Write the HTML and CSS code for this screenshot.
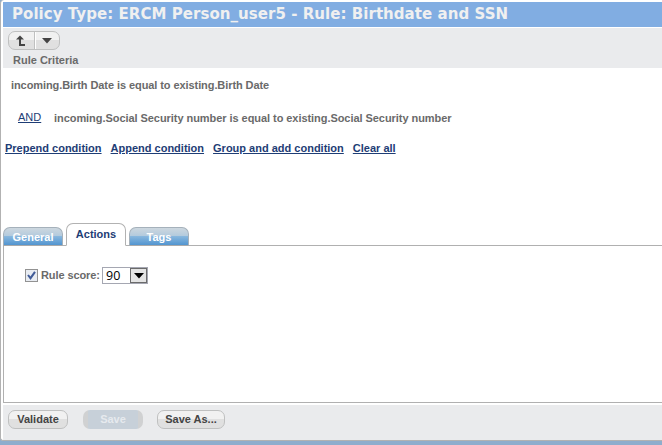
FILE: index.html
```
<!DOCTYPE html>
<html lang="en">
<head>
<meta charset="utf-8">
<title>Rule editor</title>
<link rel="stylesheet" href="styles.css">
</head>
<body>
<div class="window">
  <h1 class="title">Policy Type: ERCM Person_user5 - Rule: Birthdate and SSN</h1>
  <header class="toolbar">
    <div class="split">
      <button class="split-part" aria-label="Up"><svg width="10" height="12" viewBox="0 0 10 12"><path d="M4 0.5L8 4.5H5V9H9V11H3V4.5H0Z" fill="#444"/></svg></button>
      <button class="split-part" aria-label="Menu"><svg width="10" height="6" viewBox="0 0 10 6"><path d="M0 0H10L5 5.5Z" fill="#444"/></svg></button>
    </div>
    <div class="subtitle">Rule Criteria</div>
  </header>
  <section class="criteria">
    <div class="condition first">incoming.Birth Date is equal to existing.Birth Date</div>
    <div class="condition second"><a class="and" href="#">AND</a><span class="second-text">incoming.Social Security number is equal to existing.Social Security number</span></div>
    <nav class="links"><a class="prepend" href="#">Prepend condition</a><a class="append" href="#">Append condition</a><a class="group" href="#">Group and add condition</a><a class="clear" href="#">Clear all</a></nav>
  </section>
  <nav class="tabs"><a class="tab">General</a><a class="tab active">Actions</a><a class="tab">Tags</a></nav>
  <section class="panel">
    <div class="score">
      <span class="check"><svg width="9" height="9" viewBox="0 0 9 9"><path d="M1 4L3.5 7.2L8 0.8" fill="none" stroke="#405b98" stroke-width="2"/></svg></span>
      <label class="score-label">Rule score:</label>
      <span class="select"><span class="value">90</span><span class="arrow"><svg width="10" height="6" viewBox="0 0 10 6"><path d="M0 0H10L5 5.5Z" fill="#000"/></svg></span></span>
    </div>
  </section>
  <footer class="footer">
    <button class="btn validate">Validate</button><button class="btn save" disabled>Save</button><button class="btn save-as">Save As...</button>
  </footer>
</div>
</body>
</html>
```
FILE: styles.css
```
* { box-sizing: border-box; }
body { margin: 0; height: 445px; overflow: hidden; background: #8eadcd; font: bold 11px/14px "Liberation Sans", Arial, sans-serif; color: #6a6a6a; }
svg { display: block; }
button { font: inherit; margin: 0; padding: 0; border: 0; background: none; }
.window { display: flex; flex-direction: column; height: 441px; margin-right: -4px; padding: 2px 0 0 2px; background: #fff; border-left: 1px solid #b2b2b2; border-bottom: 1px solid #b2b2b2; border-radius: 4px 0 0 3px; }
.title { height: 25px; margin: 0; padding-left: 9px; background: #81ade2; color: #f0f0f0; font: bold 15px/24px "DejaVu Sans", Verdana, sans-serif; letter-spacing: 0.05px; white-space: nowrap; }
.toolbar { height: 40px; margin-top: 1px; padding: 3px 0 0 5px; background: #eaebed; }
.split { display: flex; width: 52px; height: 19px; border: 1px solid #bfc0c0; border-radius: 7px; background: linear-gradient(#f1f1f1 0 50%, #e0e0e0 50%); overflow: hidden; }
.split-part { display: flex; flex: 1; align-items: center; justify-content: center; }
.split-part + .split-part { border-left: 1px solid #bfc0c0; box-shadow: inset 1px 0 #fff; }
.subtitle { margin: 3px 0 0 5px; }
.criteria { height: 155px; padding-top: 10px; white-space: nowrap; }
.first { padding-left: 8px; letter-spacing: -0.08px; }
.second { display: flex; margin-top: 19px; padding-left: 15px; }
.second-text { letter-spacing: -0.055px; }
.and { width: 36px; margin-top: -1px; font-weight: normal; }
.criteria a { color: #1e3d75; text-underline-offset: 1px; }
.links { display: flex; gap: 9px; margin: 16px 0 0 2px; }
.tabs { display: flex; align-items: flex-end; gap: 3px; height: 23px; margin-bottom: -1px; position: relative; z-index: 1; }
.tab { width: 60px; height: 19px; border: 1px solid #a5b1bb; border-bottom-color: #a9a9a9; border-radius: 7px 7px 0 0; background: linear-gradient(#cdd7df 0, #b4cbdd 45%, #8bb9df 46%, #5295d0 100%); color: #fff; text-align: center; line-height: 19px; }
.active { height: 23px; border-color: #b2b2b2; border-bottom-color: #fff; background: #fff; color: #1e3d75; line-height: 20px; }
.panel { height: 158px; border: 1px solid #b0b0b0; padding: 21px 0 0 21px; }
.score { display: flex; align-items: center; height: 17px; }
.check { width: 13px; height: 13px; margin-top: -1px; border: 1px solid #929292; padding: 1px; background: #e8ecf2; }
.score-label { width: 62px; padding-left: 3px; white-space: nowrap; margin-top: -1px; letter-spacing: -0.1px; }
.select { display: flex; width: 46px; height: 17px; border: 1px solid #a5a7b2; background: #fff; margin-left: 2px; }
.value { flex: 1; padding-left: 3px; color: #000; font: 12.5px/16px "Open Sans", sans-serif; }
.arrow { display: flex; width: 17px; height: 15px; align-items: center; justify-content: center; border: 1px solid #6b6b6b; background: #e4e4e4; }
.footer { display: flex; height: 35px; margin-top: 2px; padding: 5px 0 0 5px; background: #eaebed; }
.btn { height: 19px; border: 1px solid #bfc0c0; border-radius: 7px; background: linear-gradient(#f1f1f1 0 45%, #e0e0e0 50%); color: #444; line-height: 17px; white-space: nowrap; }
.validate { width: 60px; }
.save { width: 60px; margin: 0 14px 0 15px; border: 0; color: #e6eaee; background: linear-gradient(90deg, #d0d1d2 5px, #c7d0d9 5px 55px, #d0d1d2 55px); }
.save-as { width: 68px; }
```
